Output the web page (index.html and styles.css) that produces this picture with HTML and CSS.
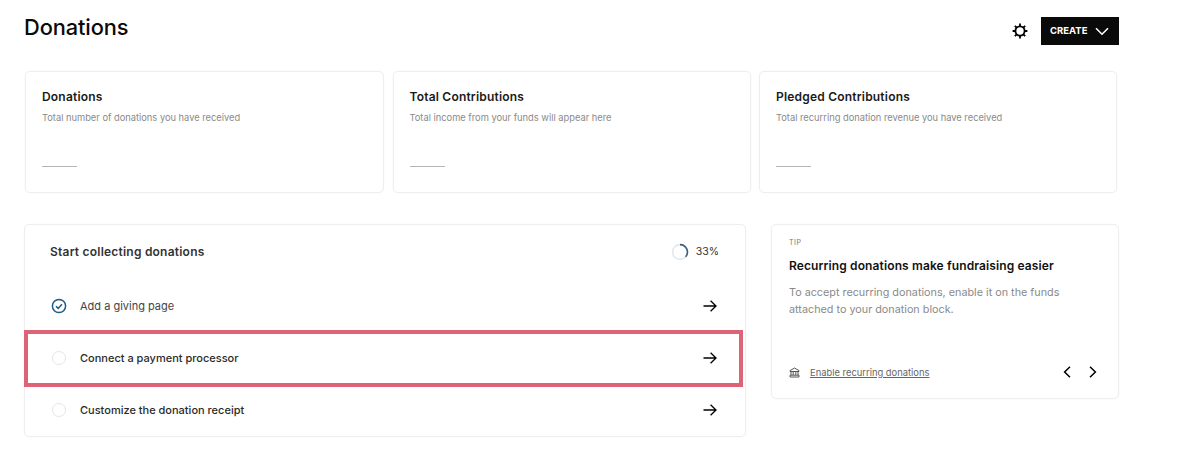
FILE: index.html
```html
<!DOCTYPE html>
<html lang="en">
<head>
<meta charset="utf-8">
<title>Donations</title>
<link rel="stylesheet" href="styles.css">
</head>
<body>
<main class="page">
  <header class="topbar">
    <h1 class="title">Donations</h1>
    <div class="actions">
      <svg class="gear" width="16" height="16" viewBox="0 0 16 16" fill="none" stroke="#000" stroke-width="1.8">
        <circle cx="8" cy="8" r="4.6"/>
        <path d="M8 .6v2.6M8 12.8v2.6M.6 8h2.6M12.8 8h2.6M2.8 2.8l1.9 1.9M11.3 11.3l1.9 1.9M2.8 13.2l1.9-1.9M11.3 4.7l1.9-1.9"/>
      </svg>
      <button class="create"><span class="create-label">CREATE</span>
        <svg width="14" height="9" viewBox="0 0 14 9" fill="none" stroke="#fff" stroke-width="1.6"><path d="M1 1.2l6 6 6-6"/></svg>
      </button>
    </div>
  </header>

  <section class="stats">
    <article class="card stat">
      <h2 class="stat-title">Donations</h2>
      <p class="stat-sub">Total number of donations you have received</p>
      <div class="dash"></div>
    </article>
    <article class="card stat">
      <h2 class="stat-title">Total Contributions</h2>
      <p class="stat-sub">Total income from your funds will appear here</p>
      <div class="dash"></div>
    </article>
    <article class="card stat">
      <h2 class="stat-title">Pledged Contributions</h2>
      <p class="stat-sub">Total recurring donation revenue you have received</p>
      <div class="dash"></div>
    </article>
  </section>

  <section class="lower">
    <article class="card checklist">
      <div class="check-head">
        <h2 class="check-title">Start collecting donations</h2>
        <div class="progress">
          <svg width="18" height="18" viewBox="0 0 18 18" fill="none" stroke-width="1.6">
            <circle cx="9" cy="9" r="7.4" stroke="#e3e8ec"/>
            <path d="M9 1.6A7.4 7.4 0 0 1 14.6 13.8" stroke="#3d6178"/>
          </svg>
          <span>33%</span>
        </div>
      </div>
      <div class="row">
        <svg class="status" width="16" height="16" viewBox="0 0 16 16" fill="none" stroke="#1d5a86" stroke-width="1.5">
          <circle cx="8" cy="8" r="6.6"/>
          <path d="M5 8.2l2.2 2.2L11 6.2"/>
        </svg>
        <span class="row-label done">Add a giving page</span>
        <svg class="arrow" width="14" height="12" viewBox="0 0 14 12" fill="none" stroke="#000" stroke-width="1.3"><path d="M.5 6h12.5M7.6.8L13 6l-5.4 5.2"/></svg>
      </div>
      <div class="row">
        <span class="status empty"></span>
        <span class="row-label">Connect a payment processor</span>
        <svg class="arrow" width="14" height="12" viewBox="0 0 14 12" fill="none" stroke="#000" stroke-width="1.3"><path d="M.5 6h12.5M7.6.8L13 6l-5.4 5.2"/></svg>
      </div>
      <div class="row">
        <span class="status empty"></span>
        <span class="row-label">Customize the donation receipt</span>
        <svg class="arrow" width="14" height="12" viewBox="0 0 14 12" fill="none" stroke="#000" stroke-width="1.3"><path d="M.5 6h12.5M7.6.8L13 6l-5.4 5.2"/></svg>
      </div>
      <div class="highlight"></div>
    </article>

    <article class="card tip">
      <div class="tip-label">TIP</div>
      <h2 class="tip-title">Recurring donations make fundraising easier</h2>
      <p class="tip-body">To accept recurring donations, enable it on the funds attached to your donation block.</p>
      <div class="tip-foot">
        <svg width="11" height="11" viewBox="0 0 11 11" fill="none" stroke="#555" stroke-width="1"><path d="M1 3.6L5.5 1 10 3.6v.9H1zM2 4.5v3.6M4.2 4.5v3.6M6.8 4.5v3.6M9 4.5v3.6M1 8.2h9v1.8H1z"/></svg>
        <a class="tip-link" href="#">Enable recurring donations</a>
        <div class="pager">
          <svg width="8" height="12" viewBox="0 0 8 12" fill="none" stroke="#000" stroke-width="1.5"><path d="M7 .8L1.6 6 7 11.2"/></svg>
          <svg width="8" height="12" viewBox="0 0 8 12" fill="none" stroke="#000" stroke-width="1.5"><path d="M1 .8L6.4 6 1 11.2"/></svg>
        </div>
      </div>
    </article>
  </section>
</main>
</body>
</html>
```

FILE: styles.css
```css
* { box-sizing: border-box; }
html, body { margin: 0; background: #fff; }
body {
  font-family: Inter, "Liberation Sans", sans-serif;
  color: #111;
  height: 475px;
  overflow: hidden;
}
h1, h2, p { margin: 0; }

.page { width: 1200px; padding: 17px 81px 0 24px; }

.topbar {
  display: flex;
  justify-content: space-between;
  align-items: flex-start;
  height: 28px;
}
.title { font-size: 21.8px; font-weight: 500; line-height: 21px; letter-spacing: -0.1px; color: #0a0a0a; }
.actions { display: flex; align-items: center; gap: 13px; }
.gear { display: block; }
.create {
  display: flex;
  align-items: center;
  justify-content: space-between;
  width: 78px;
  height: 28px;
  padding: 0 10px 0 9px;
  border: 0;
  background: #0a0a0a;
  color: #fff;
  font: 700 9.5px Inter, "Liberation Sans", sans-serif;
}
.create-label { margin-top: -2px; }

.card {
  background: #fff;
  border: 1px solid #eeeeee;
  border-radius: 5px;
  box-shadow: 0 0 2px rgba(0,0,0,.03);
}

.stats {
  display: grid;
  grid-template-columns: 359px 358px 358px;
  gap: 8.5px;
  margin: 26px 0 0 1px;
}
.stat { height: 122px; padding: 18px 16px 0; }
.stat-title { font-size: 12px; font-weight: 600; line-height: 14px; letter-spacing: .2px; color: #1a1a1a; }
.stat-sub { margin-top: 8px; font-size: 9.3px; line-height: 12px; color: #8a8a8a; }
.dash { width: 35px; height: 1px; margin-top: 42px; background: #b5b5b5; }

.lower {
  display: flex;
  align-items: flex-start;
  gap: 25px;
  margin-top: 31px;
}

.checklist { position: relative; width: 722px; height: 213px; padding: 0 26px 0 25px; }
.check-head {
  display: flex;
  justify-content: space-between;
  align-items: center;
  height: 55px;
  padding-bottom: 2px;
}
.check-title { font-size: 12px; font-weight: 600; letter-spacing: .22px; color: #333; }
.progress { display: flex; align-items: center; gap: 7px; font-size: 10.5px; color: #333; }
.progress svg { display: block; }

.row { display: flex; align-items: center; height: 52px; padding-right: 2px; }
.status { flex: none; display: block; width: 16px; height: 16px; margin-right: 13px; margin-left: 1px; }
.status.empty { border: 1.5px solid #e6e6e6; border-radius: 50%; width: 14px; height: 14px; margin: 0 14px 0 2px; }
.row-label { font-size: 11px; font-weight: 500; color: #2b2b2b; flex: 1; }
.row-label.done { font-weight: 400; color: #444; }
.arrow { display: block; }

.highlight {
  position: absolute;
  left: -1px;
  top: 105px;
  width: 719px;
  height: 57px;
  border: 4px solid #dd6477;
  pointer-events: none;
}

.tip { width: 348px; height: 175px; padding: 13px 21px 0 17px; display: flex; flex-direction: column; }
.tip-label { font-size: 7px; line-height: 9px; letter-spacing: .5px; color: #777; }
.tip-title { margin-top: 11px; font-size: 12px; font-weight: 600; line-height: 15px; letter-spacing: .12px; color: #111; white-space: nowrap; }
.tip-body { margin-top: 11px; font-size: 10.8px; line-height: 17px; color: #8a8a8a; }
.tip-foot { display: flex; align-items: center; margin-top: auto; margin-bottom: 20px; }
.tip-foot > svg { display: block; margin-right: 10px; }
.tip-link { font-size: 9.4px; color: #666; text-decoration: underline; }
.pager { display: flex; align-items: center; gap: 18px; margin-left: auto; }
.pager svg { display: block; }
```
